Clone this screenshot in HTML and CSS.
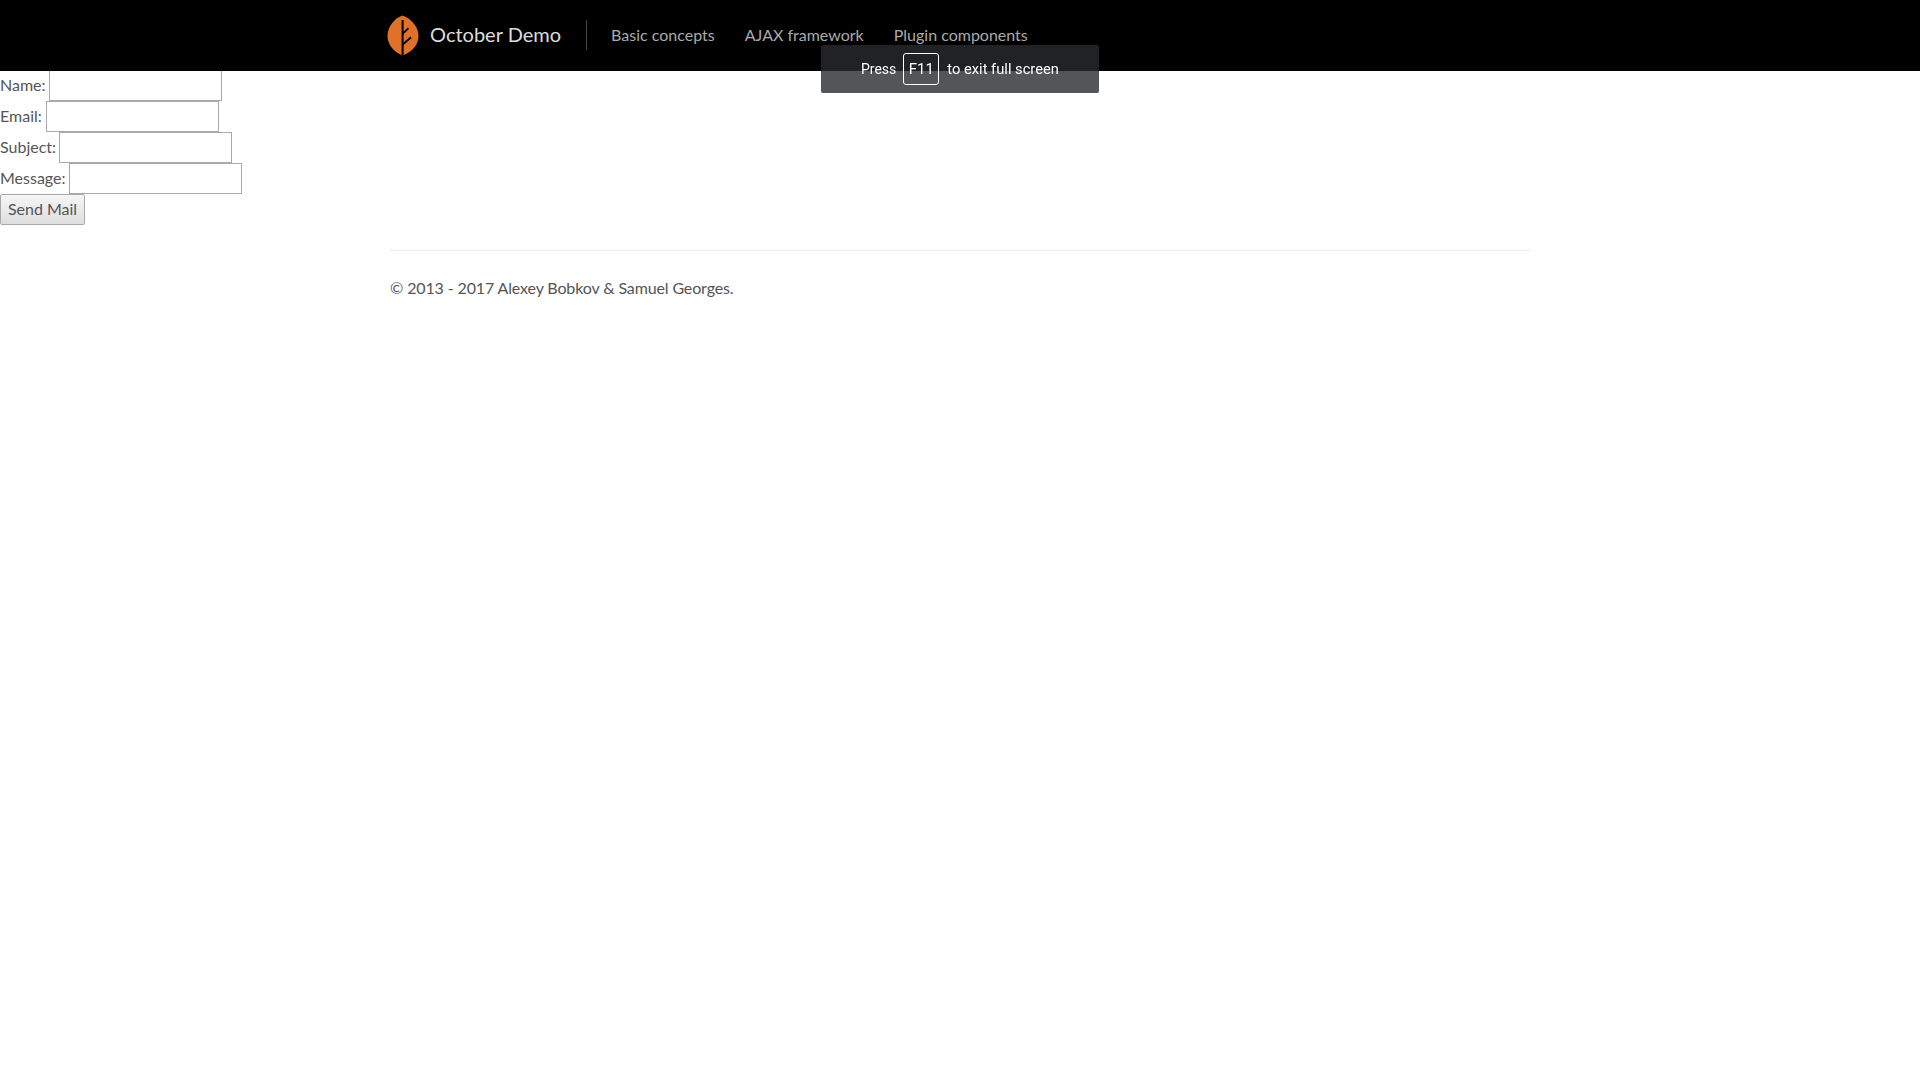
FILE: index.html
```html
<!DOCTYPE html>
<html>
<head>
    <title>October Demo</title>
    <link rel="stylesheet" href="styles.css">
</head>
<body>
    <nav class="navbar">
        <div class="nav-container">
            <a class="brand" href="#">
                <svg class="brand-logo" width="32" height="41" viewBox="0 0 32 41">
                    <path d="M15.5 0.5C23 3 31.5 11 31.5 21C31.5 30 25 37 15.5 40.5C7 37 0.5 30 0.5 21C0.5 11 8 3 15.5 0.5Z" fill="#e0702a"/>
                    <path d="M14.6 5H16.6V40.5H14.6Z" fill="#000"/>
                    <path d="M16 17L21 12.5L22 14L16 19.5Z" fill="#000"/>
                    <path d="M16 28L23.5 21.5L24.5 23.2L16 30.5Z" fill="#000"/>
                </svg>
                <span class="brand-name">October Demo</span>
            </a>
            <ul class="nav-links">
                <li><a href="#">Basic concepts</a></li>
                <li><a href="#">AJAX framework</a></li>
                <li><a href="#">Plugin components</a></li>
            </ul>
        </div>
    </nav>

    <form class="mail-form">
        <div class="form-row"><label>Name:</label><input type="text"></div>
        <div class="form-row"><label class="label-email">Email:</label><input type="text"></div>
        <div class="form-row"><label>Subject:</label><input type="text"></div>
        <div class="form-row"><label>Message:</label><input type="text"></div>
        <button type="button" class="send-btn">Send Mail</button>
    </form>

    <footer class="footer">
        <hr>
        <p>&copy; 2013 - 2017 Alexey Bobkov &amp; Samuel Georges.</p>
    </footer>

    <div class="fullscreen-toast">
        <span class="toast-press">Press</span>
        <span class="key">F11</span>
        <span class="toast-text">to exit full screen</span>
    </div>
</body>
</html>
```

FILE: styles.css
```css
body {
    margin: 0;
    padding: 0;
    font-family: Lato, "Open Sans", sans-serif;
    font-size: 16px;
    color: #555555;
    background-color: #ffffff;
}

a {
    text-decoration: none;
    color: inherit;
}

.navbar {
    height: 71px;
    background-color: #000000;
    position: relative;
    z-index: 10;
}

.nav-container {
    width: 1140px;
    height: 100%;
    margin: 0 auto;
    display: flex;
    align-items: center;
}

.brand {
    display: flex;
    align-items: center;
    margin-left: -3px;
    padding-right: 25px;
    font-size: 20px;
    color: #dddddd;
}

.brand-logo {
    display: block;
    margin-right: 11px;
}

.brand-name {
    padding-bottom: 4px;
}

.nav-links {
    list-style: none;
    margin: -1px 0 0;
    padding: 0 0 0 24px;
    display: flex;
    gap: 30px;
    color: #aaaaaa;
    border-left: 1px solid #444444;
    line-height: 30px;
}

.mail-form {
    margin-top: -1px;
}

.form-row {
    display: flex;
    align-items: center;
    height: 31px;
}

.form-row label {
    margin-right: 3px;
    padding-bottom: 2px;
}

.form-row .label-email {
    margin-right: 4px;
}

.form-row input {
    box-sizing: border-box;
    width: 173px;
    height: 31px;
    margin: 0;
    padding: 1px 2px;
    border: 1px solid #a9a9a9;
    background-color: #ffffff;
}

.send-btn {
    display: block;
    box-sizing: border-box;
    width: 85px;
    height: 31px;
    padding: 0 0 2px;
    border: 1px solid #a9a9a9;
    border-radius: 2px;
    font-family: inherit;
    font-size: 16px;
    color: #555555;
    background: linear-gradient(#f6f6f6, #dedede);
}

.footer {
    width: 1140px;
    margin: 25px auto 0;
}

.footer hr {
    margin: 0;
    border: 0;
    border-top: 1px solid #eeeeee;
}

.footer p {
    margin: 27px 0 0;
    line-height: 20px;
    letter-spacing: -0.13px;
}

.fullscreen-toast {
    position: fixed;
    top: 45px;
    left: 821px;
    width: 278px;
    height: 48px;
    box-sizing: border-box;
    padding-left: 40px;
    display: flex;
    align-items: center;
    gap: 8px;
    border-radius: 2px;
    font-family: Roboto, sans-serif;
    font-size: 15px;
    color: #ffffff;
    background-color: rgba(40, 42, 45, 0.8);
    z-index: 20;
}

.toast-press {
    font-size: 14px;
    margin-right: -1px;
}

.toast-text {
    font-size: 14.7px;
}

.key {
    box-sizing: border-box;
    width: 36px;
    height: 32px;
    line-height: 30px;
    text-align: center;
    border: 1px solid #ffffff;
    border-radius: 3px;
}
```
